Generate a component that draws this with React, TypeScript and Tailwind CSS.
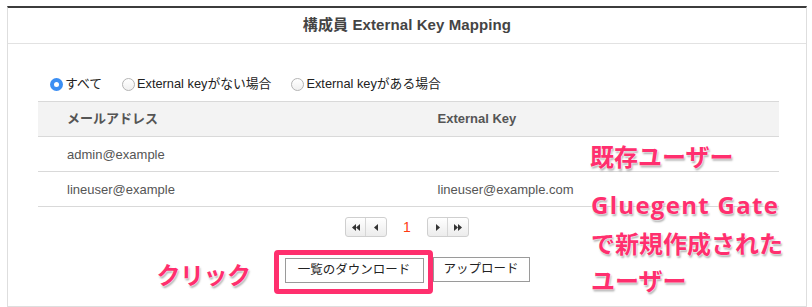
import type { ReactNode } from 'react'

const ROWS = [
  { email: 'admin@example', key: '' },
  { email: 'lineuser@example', key: 'lineuser@example.com' },
]

const FILTERS = [
  { label: 'すべて', checked: true },
  { label: 'External keyがない場合', checked: false },
  { label: 'External keyがある場合', checked: false },
]

function Radio({ checked }: { checked: boolean }) {
  if (checked) {
    return (
      <span className="w-[13px] h-[13px] rounded-full bg-[#3b8ef3] flex items-center justify-center shrink-0">
        <span className="w-[5px] h-[5px] rounded-full bg-white" />
      </span>
    )
  }
  return (
    <span className="w-[13px] h-[13px] rounded-full border border-[#b4b4b4] bg-gradient-to-b from-white to-[#f0f0f0] shrink-0" />
  )
}

// small black triangles for the pager
function Tri({ dir }: { dir: 'l' | 'r' }) {
  return (
    <svg width="4" height="7" viewBox="0 0 4 7">
      {dir === 'l' ? <path d="M4 0 L0 3.5 L4 7 Z" fill="#333" /> : <path d="M0 0 L4 3.5 L0 7 Z" fill="#333" />}
    </svg>
  )
}

function PagerBtn({ children }: { children: ReactNode }) {
  return (
    <span className="w-[20px] h-full flex items-center justify-center gap-0">{children}</span>
  )
}

export default function App() {
  const note = "font-['Noto_Sans_CJK_JP',sans-serif] font-bold text-[24px] leading-none text-[#ff2f6e] [text-shadow:0_0_2px_#fff,0_0_2px_#fff,1px_2px_2px_rgba(0,0,0,0.35)]"

  return (
    <div className="w-[812px] h-[307px] bg-white pt-[6px] pl-[7px] overflow-hidden font-['Liberation_Sans','Noto_Sans_CJK_JP',sans-serif]">
      <div className="relative w-[800px] h-[301px] bg-white border-t-2 border-t-[#3c3c3c] border-x border-b border-x-[#dedede] border-b-[#dedede]">

        {/* ── Title ─────────────────────────────────────────── */}
        <div className="h-[36px] border-b border-[#e2e2e2] flex items-center justify-center">
          <h1 className="text-[15px] font-bold text-[#444] tracking-[0.1px]">構成員 External Key Mapping</h1>
        </div>

        {/* ── Filters ───────────────────────────────────────── */}
        <div className="pl-[42px] pt-[30px] h-[50px] flex items-center">
          {FILTERS.map((f, i) => (
            <label key={f.label} className={'flex items-center gap-[2px] text-[12.8px] text-[#222] ' + (i > 0 ? 'ml-[20px]' : '')}>
              <Radio checked={f.checked} />
              {f.label}
            </label>
          ))}
        </div>

        {/* ── Table ─────────────────────────────────────────── */}
        <div className="ml-[30px] mt-[7px] w-[741px] text-[13px] text-[#555]">
          <div className="h-[36px] grid grid-cols-2 items-center bg-[#f3f3f3] border-y border-[#d9d9d9] font-bold text-[#555]">
            <span className="pl-[29px]">メールアドレス</span>
            <span className="pl-[29px]">External Key</span>
          </div>
          {ROWS.map((r) => (
            <div key={r.email} className="h-[35px] grid grid-cols-2 items-center border-b border-[#d9d9d9]">
              <span className="pl-[29px] pt-[1px]">{r.email}</span>
              <span className="pl-[29px] pt-[1px]">{r.key}</span>
            </div>
          ))}
        </div>

        {/* ── Pager ─────────────────────────────────────────── */}
        <div className="mt-[10px] h-[20px] flex items-center justify-center">
          <div className="h-[20px] flex border border-[#cfcfcf] rounded-[3px] bg-gradient-to-b from-white to-[#ececec] divide-x divide-[#d6d6d6]">
            <PagerBtn><Tri dir="l" /><Tri dir="l" /></PagerBtn>
            <PagerBtn><Tri dir="l" /></PagerBtn>
          </div>
          <span className="w-[40px] text-center text-[14px] text-[#ff3b12]">1</span>
          <div className="h-[20px] flex border border-[#cfcfcf] rounded-[3px] bg-gradient-to-b from-white to-[#ececec] divide-x divide-[#d6d6d6]">
            <PagerBtn><Tri dir="r" /></PagerBtn>
            <PagerBtn><Tri dir="r" /><Tri dir="r" /></PagerBtn>
          </div>
        </div>

        {/* ── Buttons ───────────────────────────────────────── */}
        <div className="mt-[20px] flex justify-center gap-[9px]">
          <div className="relative">
            <button className="w-[139px] h-[25px] border border-[#9a9a9a] bg-white text-[12.5px] text-[#222]">一覧のダウンロード</button>
            <div className="absolute -left-[11px] -right-[9px] -top-[7px] -bottom-[11px] border-[5px] border-[#ff2f6e] rounded-[4px]" />
            <span className={'absolute right-full mr-[34px] top-[5px] whitespace-nowrap tracking-[-0.5px] ' + note}>クリック</span>
          </div>
          <button className="w-[97px] h-[25px] border border-[#9a9a9a] bg-white text-[12.5px] text-[#222]">アップロード</button>
        </div>

        {/* ── Annotations ───────────────────────────────────── */}
        <span className={'absolute left-[582px] top-[136px] ' + note}>既存ユーザー</span>
        <div className={'absolute left-[583px] top-[178px] !leading-[37.5px] ' + note}>
          <p className="font-['Open_Sans','Noto_Sans_CJK_JP',sans-serif] tracking-[1.3px]">Gluegent Gate</p>
          <p>で新規作成された</p>
          <p>ユーザー</p>
        </div>
      </div>
    </div>
  )
}
